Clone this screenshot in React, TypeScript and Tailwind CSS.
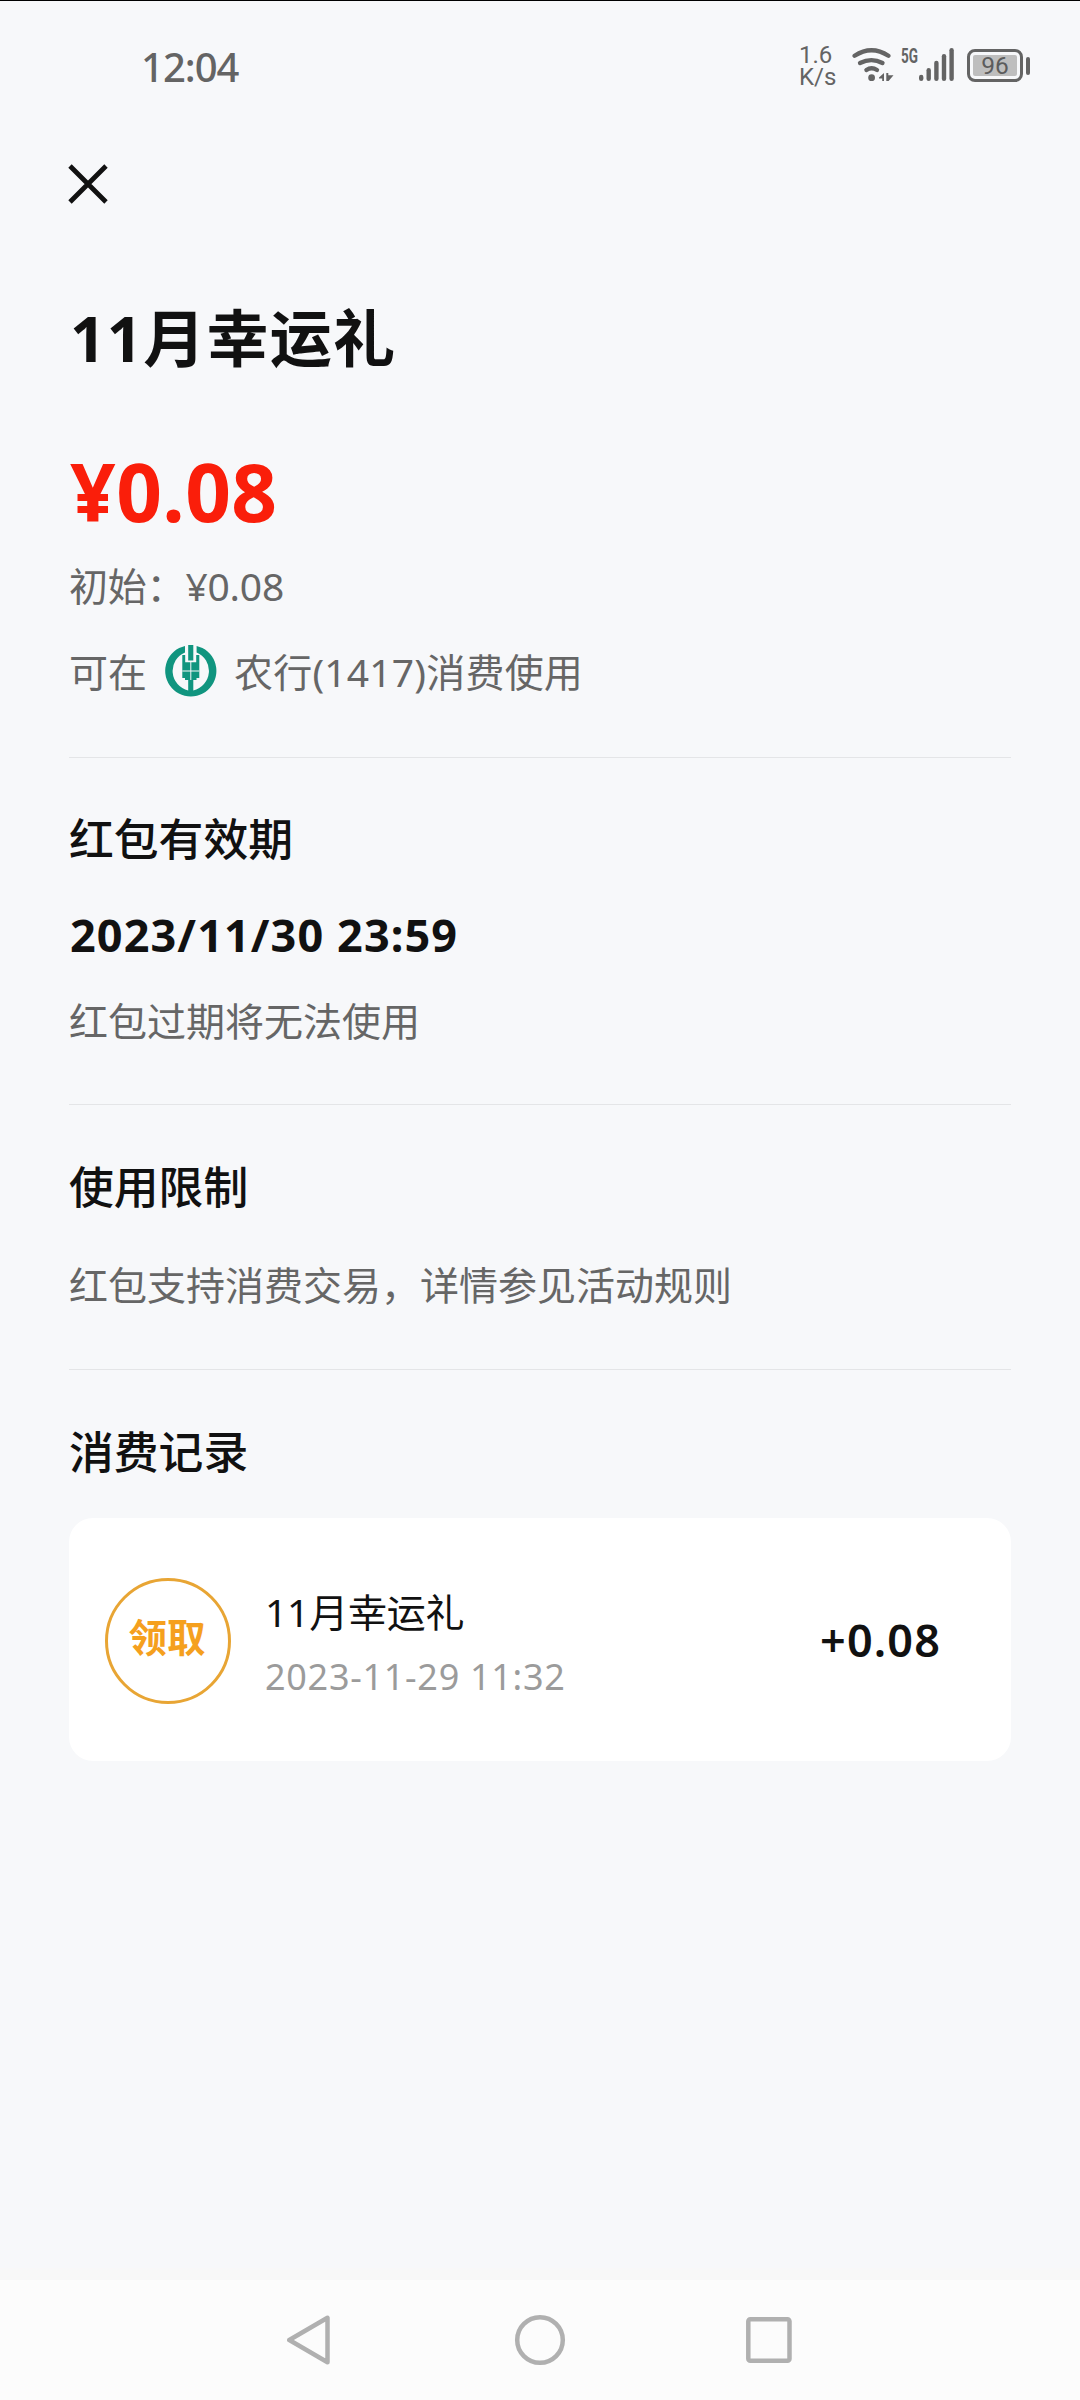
type TextRowProps = {
  className: string;
  children: React.ReactNode;
};

type Section = {
  title: string;
  date?: string;
  note: string;
};

const validity: Section = {
  title: "红包有效期",
  date: "2023/11/30 23:59",
  note: "红包过期将无法使用",
};

const limits: Section = {
  title: "使用限制",
  note: "红包支持消费交易，详情参见活动规则",
};

function WifiIcon() {
  return (
    <svg width="43" height="36" viewBox="0 0 43 36" fill="none" stroke="#646464" strokeWidth="4.3">
      <path d="M3.6 7.8Q20.5 -3.4 37.4 7.8" strokeLinecap="round" />
      <path d="M9 15Q20.5 9.2 31.5 15" strokeLinecap="round" />
      <path d="M15.4 22Q20.6 18.4 26 22" strokeLinecap="round" />
      <circle cx="20.6" cy="29.7" r="3.4" fill="#646464" stroke="none" />
      <path d="M33 25V33H31.2V30.6H28V29.5Z" fill="#646464" stroke="none" />
      <path d="M35.3 25H37.3V27.2H42.5L37.6 33H35.3Z" fill="#646464" stroke="none" />
    </svg>
  );
}

function SignalIcon() {
  return (
    <svg width="54" height="36" viewBox="0 0 54 36" fill="#646464" className="overflow-visible">
      <text
        x="0"
        y="15"
        fontFamily="Roboto"
        fontWeight="700"
        fontSize="20.5"
        textLength="17"
        lengthAdjust="spacingAndGlyphs"
      >
        5G
      </text>
      <rect x="18" y="26.7" width="4.4" height="6.3" rx="2.2" />
      <rect x="25.5" y="20" width="4.4" height="13" rx="2.2" />
      <rect x="33.2" y="12.7" width="4.4" height="20.3" rx="2.2" />
      <rect x="40.8" y="6" width="4.4" height="27" rx="2.2" />
      <rect x="48.4" y="0" width="4.4" height="33" rx="2.2" />
    </svg>
  );
}

function Battery() {
  return (
    <div className="flex h-[35px] items-center gap-[3px]">
      <div className="h-[33px] w-[56px] rounded-[8px] border-[3px] border-[#646464] p-[3px]">
        <div className="flex h-full items-center justify-center rounded-[2px] bg-[#bebebe] pt-px font-['Roboto'] text-[24.5px] leading-none text-[#5c5c5c]">
          96
        </div>
      </div>
      <div className="h-[18px] w-[4px] rounded-full bg-[#646464]" />
    </div>
  );
}

function StatusBar() {
  return (
    <header className="flex h-[130px] items-start justify-between border-t border-black pr-[50px] pl-[141px] text-[#646464]">
      <div className="pt-[38px] text-[40px] leading-[56px] font-medium tracking-[-1px]">12:04</div>
      <div className="flex pt-[47px]">
        <div className="-mt-[4px] w-[52px] font-['Roboto'] text-[24px] leading-[22px]">
          <div>1.6</div>
          <div>K/s</div>
        </div>
        <WifiIcon />
        <div className="w-[7px]" />
        <SignalIcon />
        <div className="w-[12px]" />
        <Battery />
      </div>
    </header>
  );
}

function BankLogo() {
  return (
    <svg width="52" height="52" viewBox="0 0 52 52" fill="#10957f">
      <path d="M20 .9A25.6 25.6 0 1 0 31.6 .9V7.4A20 20 0 0 1 28.3 45.4V35H31.5V33H34.3V10H31.2V17.3H20.2V10H17.3V33H20V35H23.2V45.4A20 20 0 0 1 20 7.4Z" />
      <rect x="23.2" y="0" width="5.1" height="15.5" />
      <path d="M17.3 26H34.3M25.8 17V35" stroke="#f7f8fa" strokeWidth="1" />
    </svg>
  );
}

function TextRow({ className, children }: TextRowProps) {
  return <p className={`whitespace-nowrap ${className}`}>{children}</p>;
}

function Divider() {
  return <div className="h-px bg-[#e4e5e7]" />;
}

function RecordCard() {
  return (
    <div className="flex h-[243px] items-center rounded-[24px] bg-white pr-[70px] pl-[36px]">
      <div className="mt-[3px] flex size-[126px] shrink-0 items-center justify-center rounded-full border-[3.5px] border-[#e8a534] pr-[2px] pb-[7px] text-[38.5px] leading-none font-bold text-[#f5a01e]">
        领取
      </div>
      <div className="mt-[9px] ml-[34px] flex-1">
        <TextRow className="text-[39px] leading-[64px] tracking-[-0.2px] text-[#111]">11月幸运礼</TextRow>
        <TextRow className="mt-px text-[36px] leading-[64px] tracking-[0.7px] text-[#9b9b9b]">2023-11-29 11:32</TextRow>
      </div>
      <div className="text-[45px] leading-none font-semibold tracking-[1.1px] text-[#111]">+0.08</div>
    </div>
  );
}

function NavBar() {
  return (
    <nav className="flex h-[120px] items-center justify-center bg-[#fcfcfc]">
      <svg width="506" height="52" viewBox="0 0 506 52" fill="none" stroke="#b0b0b0" strokeWidth="4.5" strokeLinejoin="round">
        <path d="M2.3 26L40.5 3.8V48.2Z" />
        <circle cx="253" cy="26" r="22.8" />
        <rect x="461.3" y="5.2" width="41.2" height="41.5" rx="2" />
      </svg>
    </nav>
  );
}

export default function App() {
  return (
    <div className="flex h-[2400px] w-[1080px] flex-col bg-[#f7f8fa] font-['Noto_Sans','Noto_Sans_CJK_SC',sans-serif] text-[#111]">
      <StatusBar />
      <main className="flex-1 px-[69px]">
        <button type="button" aria-label="关闭" className="mt-[34px] -ml-px block">
          <svg width="40" height="40" viewBox="0 0 40 40" stroke="#111" strokeWidth="4.8">
            <path d="M2 2L38 38M38 2L2 38" />
          </svg>
        </button>
        <h1 className="mt-[89px] ml-px text-[62px] leading-[90px] font-bold tracking-[1.2px]">11月幸运礼</h1>
        <TextRow className="mt-[53px] ml-px text-[80px] leading-[110px] font-bold tracking-[0.4px] text-[#fa1e0a]">¥0.08</TextRow>
        <TextRow className="mt-[10px] text-[39px] leading-[60px] tracking-[-0.2px] text-[#666]">初始：¥0.08</TextRow>
        <div className="mt-[24px] flex h-[64px] items-center text-[39px] leading-[62px] text-[#666]">
          <span className="mr-[18px]">可在</span>
          <div className="-mt-[3px]">
            <BankLogo />
          </div>
          <span className="ml-[17px] whitespace-nowrap tracking-[0.2px]">农行(1417)消费使用</span>
        </div>
        <div className="h-[53px]" />
        <Divider />
        <h2 className="mt-[49px] text-[44.8px] leading-[64px] font-medium">{validity.title}</h2>
        <TextRow className="mt-[32px] ml-px text-[45px] leading-[64px] font-bold tracking-[1.1px]">{validity.date}</TextRow>
        <TextRow className="mt-[24px] text-[39px] leading-[60px] text-[#666]">{validity.note}</TextRow>
        <div className="h-[53px]" />
        <Divider />
        <h2 className="mt-[50px] text-[44.8px] leading-[64px] font-medium">{limits.title}</h2>
        <TextRow className="mt-[36px] text-[39px] leading-[60px] text-[#666]">{limits.note}</TextRow>
        <div className="h-[54px]" />
        <Divider />
        <h2 className="mt-[50px] mb-[34px] text-[44.8px] leading-[64px] font-medium">消费记录</h2>
        <RecordCard />
      </main>
      <div className="h-[12px] bg-[#f8f8f8]" />
      <NavBar />
    </div>
  );
}
